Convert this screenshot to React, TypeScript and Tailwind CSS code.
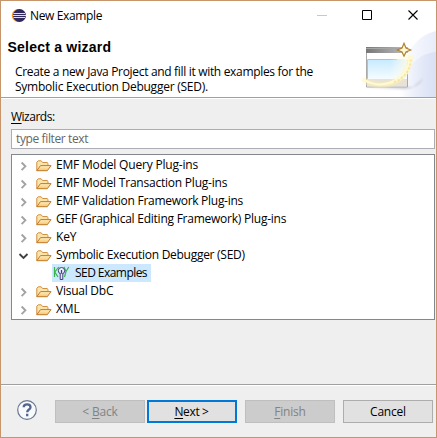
import React from "react";

type Item = { label: string; tracking: string; open?: boolean };

const before: Item[] = [
  { label: "EMF Model Query Plug-ins", tracking: "tracking-[-0.19px]" },
  { label: "EMF Model Transaction Plug-ins", tracking: "tracking-[-0.22px]" },
  { label: "EMF Validation Framework Plug-ins", tracking: "tracking-[-0.28px]" },
  { label: "GEF (Graphical Editing Framework) Plug-ins", tracking: "tracking-[-0.24px]" },
  { label: "KeY", tracking: "tracking-[-0.2px]" },
  { label: "Symbolic Execution Debugger (SED)", tracking: "tracking-[-0.28px]", open: true },
];
const after: Item[] = [
  { label: "Visual DbC", tracking: "tracking-[-0.25px]" },
  { label: "XML", tracking: "tracking-[-0.1px]" },
];

function Folder() {
  return (
    <svg className="mt-px ml-[8px] h-4 w-4 shrink-0" viewBox="0 0 16 16">
      <defs>
        <linearGradient id="folder" x1="0" y1="0" x2="0" y2="1">
          <stop offset="0" stopColor="#fff0c4" />
          <stop offset="1" stopColor="#f3c56c" />
        </linearGradient>
      </defs>
      <path d="M0.8 12.7V4.2L2.2 2.8H5.2L6.6 4.5H11.1L12 5.4V7.5" fill="#fbe3ac" stroke="#cf9140" />
      <path d="M0.8 12.7L4.5 7.6H15L11.3 12.7Z" fill="url(#folder)" stroke="#c07a28" strokeLinejoin="round" />
    </svg>
  );
}

function Row({ item }: { item: Item }) {
  return (
    <div className="flex h-[18px] items-center">
      <svg className="mt-[2px] ml-[6px] h-[13px] w-[13px] shrink-0" viewBox="0 0 13 13" fill="none">
        {item.open ? (
          <path d="M1.5 4L5.5 8L9.5 4" stroke="#404040" strokeWidth="1.8" />
        ) : (
          <path d="M3.6 2.5L7.4 6.3L3.6 10.1" stroke="#a3a3a3" strokeWidth="1.9" />
        )}
      </svg>
      <div className="-ml-[3px]"><Folder /></div>
      <span className={`ml-[4px] ${item.tracking}`}>{item.label}</span>
    </div>
  );
}

function EclipseLogo() {
  return (
    <svg className="h-4 w-4" viewBox="0 0 16 16">
      <circle cx="7.2" cy="7.5" r="6.4" fill="#f7941e" />
      <circle cx="8.5" cy="7.5" r="6.5" fill="#30275d" />
      <path d="M2.5 5.5H14M2 7.5H15M2.5 9.5H14" stroke="#dedbea" />
    </svg>
  );
}

function WizardBanner() {
  return (
    <svg className="h-[66px] w-[76px]" viewBox="360 31 76 66">
      <defs>
        <linearGradient id="swoosh" x1="0" y1="0" x2="1" y2="0">
          <stop offset="0" stopColor="#ffffff" />
          <stop offset="0.4" stopColor="#f5f7fd" />
          <stop offset="1" stopColor="#e7ecf9" />
        </linearGradient>
        <linearGradient id="inner" x1="0" y1="0" x2="1" y2="0">
          <stop offset="0" stopColor="#dfe5f7" stopOpacity="0" />
          <stop offset="1" stopColor="#dae1f5" />
        </linearGradient>
        <linearGradient id="bar" x1="0" y1="0" x2="1" y2="0">
          <stop offset="0" stopColor="#777777" />
          <stop offset="1" stopColor="#c0c0c0" />
        </linearGradient>
        <linearGradient id="pane" x1="0" y1="0" x2="0" y2="1">
          <stop offset="0" stopColor="#c5eaff" />
          <stop offset="1" stopColor="#f6fcff" />
        </linearGradient>
        <linearGradient id="fade" x1="0" y1="0" x2="1" y2="0">
          <stop offset="0" stopColor="#fffef4" stopOpacity="0" />
          <stop offset="1" stopColor="#fffbe4" stopOpacity="0.95" />
        </linearGradient>
        <filter id="soft" x="-30%" y="-30%" width="160%" height="160%">
          <feGaussianBlur stdDeviation="1.2" />
        </filter>
      </defs>
      <path d="M398 97C398 64 412 36 436 31V97Z" fill="url(#swoosh)" />
      <path d="M402 97C403 70 415 54 436 52V97Z" fill="url(#inner)" />
      <path d="M364 87L413 87L424 78Q416 90 402 89Z" fill="#b0aab8" fillOpacity="0.65" filter="url(#soft)" />
      <path d="M366 47h42v40h-42z" fill="#fff" />
      <path d="M366 47h42v6h-42z" fill="url(#bar)" />
      <path d="M366 48.5h38" stroke="#a5a5a5" />
      <path d="M366.5 53v34H407.5V60" fill="#fff" stroke="#a9a9a9" />
      <path d="M367 59h40v20h-40z" fill="url(#pane)" />
      <path d="M367 79h40v7h-40z" fill="#e8e2d5" />
      <path d="M367.5 59.5H397M367.5 60V79" stroke="#a5c4d4" fill="none" />
      <path d="M390 54H409V72Q402 83 390 84Z" fill="url(#fade)" />
      <path d="M363 79C378 91 408 86 411 56" fill="none" stroke="#fff3ab" strokeWidth="4" strokeOpacity="0.8" filter="url(#soft)" />
      <path d="M363 79C378 90 406 85 411 56" fill="none" stroke="#fffad6" strokeWidth="2" />
      <path d="M394 82L399 80L404 76L408 71L410 65L411 58" fill="none" stroke="#f5d98c" strokeWidth="2" strokeDasharray="2 2" strokeOpacity="0.6" />
      <path d="M404 43.3L406 48L410.7 50L406 52L404 56.2L402 52L397.3 50L402 48Z" fill="#fff8d2" stroke="#ae8134" strokeWidth="1.2" />
    </svg>
  );
}

function KeyIcon() {
  return (
    <svg className="h-[16px] w-[17px] shrink-0" viewBox="0 0 17 16" fill="none">
      <path d="M1.5 2V12M5.8 2L1.8 7L5 12" stroke="#35b44a" strokeWidth="1.2" />
      <path d="M11 2L13 6.5L15.8 2M13 6.5L11.5 12" stroke="#35b44a" strokeWidth="1.2" />
      <circle cx="8.5" cy="5.7" r="3.2" fill="#eef4ff" stroke="#403b7d" />
      <path d="M7.2 8.5V14.5H9.8V8.5" fill="#e5e9ff" stroke="#403b7d" />
      <path d="M8.5 5V8.5" stroke="#403b7d" strokeWidth="1.3" />
    </svg>
  );
}

export default function App() {
  return (
    <div className="flex h-[438px] w-[437px] flex-col overflow-hidden border border-[#c6956c] bg-[#efefef] font-['Open_Sans','Noto_Sans',sans-serif] text-[12px] leading-[18px] whitespace-nowrap text-black">
      <header className="relative h-[97px] shrink-0 border-b border-[#a0a0a0] bg-white">
        <div className="absolute right-0 bottom-0"><WizardBanner /></div>
        <div className="flex h-[29px] items-center pl-[10px]">
          <EclipseLogo />
          <span className="ml-[3px] tracking-[-0.36px]">New Example</span>
          <svg className="ml-auto h-[29px] w-[126px]" viewBox="310 1 126 29" fill="none">
            <path d="M317 15.5H327" stroke="#c8c8c8" />
            <path d="M362.5 10.5h9v9h-9z" stroke="#000" />
            <path d="M408.5 10.5L417.5 19.5M417.5 10.5L408.5 19.5" stroke="#000" strokeWidth="1.1" />
          </svg>
        </div>
        <h1 className="mt-[9px] ml-[6.5px] font-['Liberation_Sans',Arial,sans-serif] text-[14px] leading-[17px] font-bold tracking-[0.22px]">Select a wizard</h1>
        <p className="relative mt-[8px] ml-[14px] leading-[15px]">
          <span className="block tracking-[-0.32px]">Create a new Java Project and fill it with examples for the</span>
          <span className="block tracking-[-0.24px]">Symbolic Execution Debugger (SED).</span>
        </p>
      </header>
      <main className="h-[286px] shrink-0 border-t border-white pr-px pl-[10px]">
        <div className="mt-[9px] h-[21px] tracking-[-0.5px]"><span className="underline underline-offset-2">W</span>izards:</div>
        <div className="flex h-[20px] items-center border border-[#abadb3] bg-white pl-[4px] tracking-[-0.38px] text-[#666]">type filter text</div>
        <div className="mt-[5px] h-[166px] border border-[#828790] bg-white pt-px">
          {before.map((item) => <Row key={item.label} item={item} />)}
          <div className="ml-[40px] flex h-[18px] w-[99px] items-center bg-[#cce8ff] pl-px">
            <KeyIcon />
            <span className="ml-[5px] tracking-[-0.55px]">SED Examples</span>
          </div>
          {after.map((item) => <Row key={item.label} item={item} />)}
        </div>
      </main>
      <footer className="flex grow items-start border-t border-[#a0a0a0] pl-[16px] shadow-[inset_0_1px_0_#fff]">
        <svg className="mt-[15px] h-[20px] w-[20px]" viewBox="0 0 20 20">
          <circle cx="10" cy="10" r="9.3" fill="#f8fafd" stroke="#68788f" strokeWidth="1.2" />
          <path d="M6.7 7.2C6.7 3.3 13.5 3.3 13.5 7.2C13.5 9.7 10.2 9.3 10.2 12.2M10.2 13.8V16.2" fill="none" stroke="#53678a" strokeWidth="2.3" />
        </svg>
        <div className="mt-[15px] ml-[18px] flex h-[23px] w-[90px] items-center justify-center border border-[#bfbfbf] bg-[#ccc] tracking-[-0.15px] text-[#838383]"><span>&lt; <u className="underline-offset-2">B</u>ack</span></div>
        <div className="mt-[15px] ml-[2px] flex h-[23px] w-[90px] items-center justify-center border-2 border-[#0078d7] bg-[#e1e1e1] pr-px tracking-[-0.35px]"><span><u className="underline-offset-2">N</u>ext &gt;</span></div>
        <div className="mt-[15px] ml-[8px] flex h-[23px] w-[90px] items-center justify-center border border-[#bfbfbf] bg-[#ccc] tracking-[-0.2px] text-[#838383]"><span><u className="underline-offset-2">F</u>inish</span></div>
        <div className="mt-[15px] ml-[8px] flex h-[23px] w-[90px] items-center justify-center border border-[#adadad] bg-[#e1e1e1] tracking-[-0.2px]">Cancel</div>
      </footer>
    </div>
  );
}
